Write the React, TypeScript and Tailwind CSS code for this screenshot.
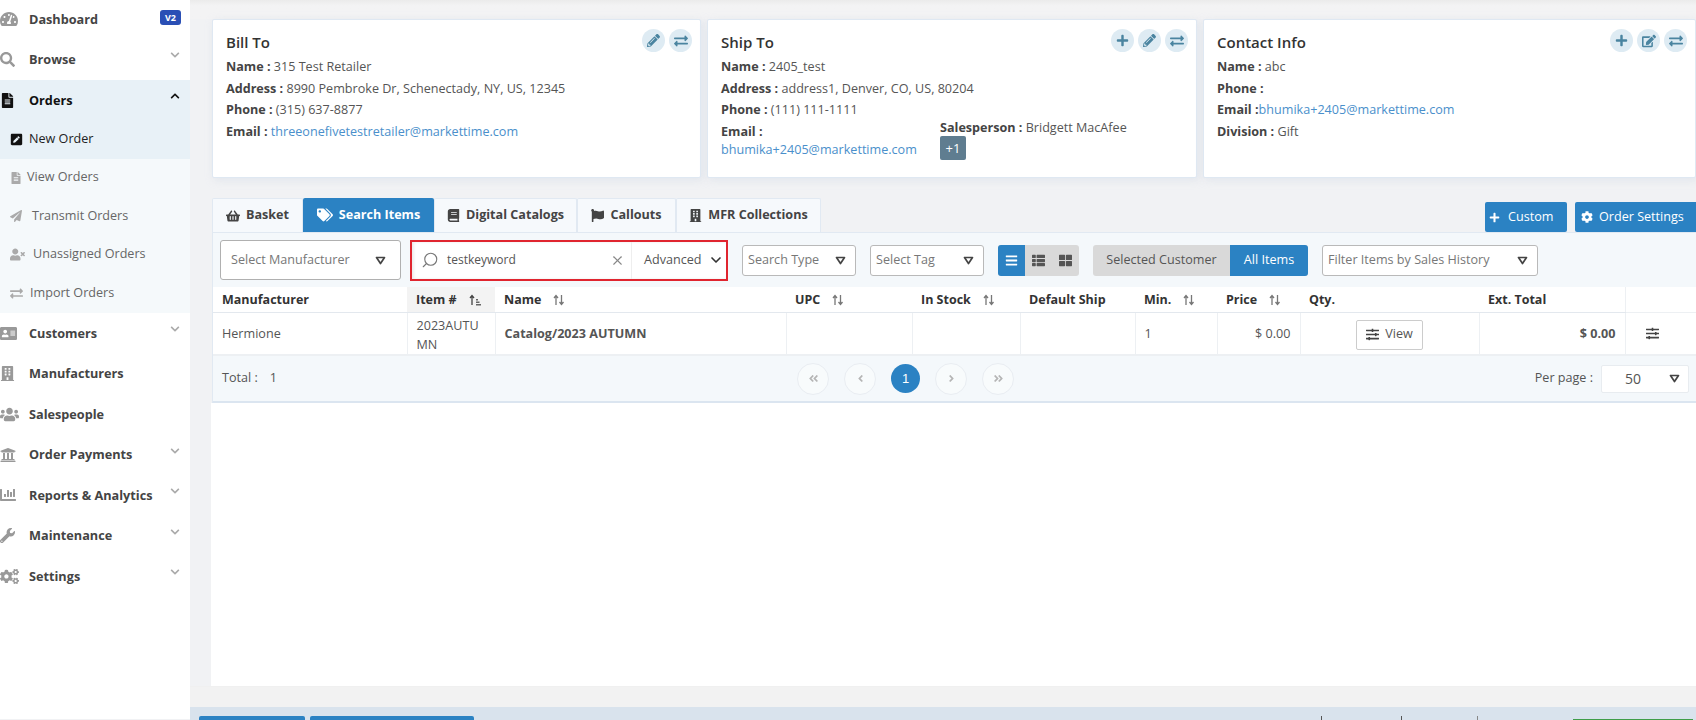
import React from "react";
import {
  FaTachometerAlt, FaSearch, FaFileAlt, FaPenSquare, FaPaperPlane, FaUserTimes, FaExchangeAlt,
  FaAddressCard, FaBuilding, FaUsers, FaUniversity, FaChartBar, FaWrench, FaCogs, FaChevronDown, FaChevronUp,
  FaPencilAlt, FaPlus, FaEdit, FaShoppingBasket, FaTags, FaBook, FaFlag, FaBars, FaThList, FaThLarge, FaCog,
  FaSlidersH, FaAngleDoubleLeft, FaAngleDoubleRight, FaAngleLeft, FaAngleRight,
} from "react-icons/fa";
import { Search, X, ChevronDown } from "lucide-react";

function Caret() {
  return (
    <svg width="11" height="9" viewBox="0 0 11 9" className="shrink-0">
      <path d="M1.5 1.5h8L5.5 7.5z" fill="none" stroke="#444" strokeWidth="1.7" strokeLinejoin="round" />
    </svg>
  );
}

function Sort({ amount }: { amount?: boolean }) {
  return (
    <svg width="12" height="12" viewBox="0 0 12 12" className="shrink-0">
      <path d="M3 11V2M1 4l2-2.5L5 4" fill="none" stroke={amount ? "#444" : "#777"} strokeWidth="1.3" />
      {amount ? (
        <path d="M7 5h2v1.5H7zM7 7.5h3.5V9H7zM7 10h5v1.5H7z" fill="#666" />
      ) : (
        <path d="M8.5 1v9M6.5 8l2 2.5 2-2.5" fill="none" stroke="#777" strokeWidth="1.3" />
      )}
    </svg>
  );
}

function NavItem({ icon, label, chevron, up, dark }: { icon: React.ReactNode; label: string; chevron?: boolean; up?: boolean; dark?: boolean }) {
  return (
    <div className={`relative h-[40.45px] flex items-center shrink-0 ${dark ? "text-[#111]" : "text-[#444]"}`}>
      <span className={`w-[29px] flex items-center ${dark ? "text-[#111]" : "text-[#999]"}`}>{icon}</span>
      <span className="text-[12.7px] font-bold">{label}</span>
      {chevron && (
        <span className={`absolute left-[170px] top-[11px] ${dark ? "text-[#111]" : "text-[#aaa]"}`}>
          {up ? <FaChevronUp size={10} /> : <FaChevronDown size={10} />}
        </span>
      )}
    </div>
  );
}

function SubItem({ icon, label, active, gap }: { icon: React.ReactNode; label: string; active?: boolean; gap: string }) {
  return (
    <div className={`h-[39px] flex items-center pl-[10px] pb-[1px] text-[12.6px] ${active ? "bg-[#e8f1f7] text-[#222]" : "text-[#666]"} ${gap}`}>
      <span className={active ? "text-[#111]" : "text-[#aaa]"}>{icon}</span>
      <span>{label}</span>
    </div>
  );
}

function Sidebar() {
  return (
    <aside className="w-[190px] shrink-0 bg-white h-[720px] overflow-hidden flex flex-col -mt-px pt-0">
      <div className="relative">
        <NavItem icon={<FaTachometerAlt size={18} />} label="Dashboard" />
        <span className="absolute left-[160px] top-[11px] w-[21px] h-[15px] rounded-[3px] bg-[#2a4fb5] text-white text-[9px] font-bold flex items-center justify-center">V2</span>
      </div>
      <NavItem icon={<FaSearch size={15} />} label="Browse" chevron />
      <div className="bg-[#e8f1f7]">
        <NavItem icon={<FaFileAlt size={15} />} label="Orders" chevron up dark />
      </div>
      <div className="h-[193px] bg-[#f5f9fb] flex flex-col">
        <SubItem active icon={<FaPenSquare size={13} />} label="New Order" gap="gap-[6px]" />
        <SubItem icon={<FaFileAlt size={12} />} label="View Orders" gap="gap-[5px]" />
        <SubItem icon={<FaPaperPlane size={12} />} label="Transmit Orders" gap="gap-[10px]" />
        <SubItem icon={<FaUserTimes size={15} />} label="Unassigned Orders" gap="gap-[8px]" />
        <SubItem icon={<FaExchangeAlt size={13} />} label="Import Orders" gap="gap-[7px]" />
      </div>
      <NavItem icon={<FaAddressCard size={17} />} label="Customers" chevron />
      <NavItem icon={<FaBuilding size={15} />} label="Manufacturers" />
      <NavItem icon={<FaUsers size={19} />} label="Salespeople" />
      <NavItem icon={<FaUniversity size={16} />} label="Order Payments" chevron />
      <NavItem icon={<FaChartBar size={16} />} label="Reports & Analytics" chevron />
      <NavItem icon={<FaWrench size={15} />} label="Maintenance" chevron />
      <NavItem icon={<FaCogs size={19} />} label="Settings" chevron />
    </aside>
  );
}

function RoundIcon({ children }: { children: React.ReactNode }) {
  return <span className="w-[23px] h-[23px] rounded-full bg-[#deebf3] text-[#4a84a0] flex items-center justify-center">{children}</span>;
}

function Field({ k, children }: { k: string; children?: React.ReactNode }) {
  return (
    <div className="h-[21.6px] leading-[21.6px] whitespace-nowrap">
      <b className="font-bold text-[#444]">{k}</b>
      {children}
    </div>
  );
}

const linkCls = "text-[#4a8fcb]";

function Card({ title, icons, width, children }: { title: string; icons: React.ReactNode; width: string; children: React.ReactNode }) {
  return (
    <section className={`relative h-[159px] bg-white border border-[#dfe8f2] rounded-[2px] shadow-[2px_2px_8px_rgba(200,210,225,0.4)] pl-[13px] pt-[10px] text-[12.6px] text-[#555] ${width}`}>
      <h3 className="text-[15px] leading-[24px] font-semibold text-[#333] mb-[2px]">{title}</h3>
      <div className="absolute top-[9px] right-[8px] flex gap-[4px]">{icons}</div>
      {children}
    </section>
  );
}

function Tab({ icon, label, width, active }: { icon: React.ReactNode; label: string; width: string; active?: boolean }) {
  return (
    <div className={`h-[34px] flex items-center justify-center gap-[6px] text-[12.6px] font-bold rounded-t-[2px] ${width} ${active ? "bg-[#2b82c3] text-white" : "bg-[#f6f9fc] text-[#444] border border-b-0 border-[#e1e9f2]"}`}>
      {icon}
      <span>{label}</span>
    </div>
  );
}

function Sel({ label, width }: { label: string; width: string }) {
  return (
    <div className={`h-[31px] bg-white border border-[#b9b9b9] rounded-[3px] flex items-center justify-between pl-[5px] pr-[9px] text-[12.6px] text-[#777] ${width}`}>
      <span className="whitespace-nowrap">{label}</span>
      <Caret />
    </div>
  );
}

function Th({ children, sort, amount, extra }: { children?: React.ReactNode; sort?: boolean; amount?: boolean; extra?: string }) {
  return (
    <th className={`h-[25px] border-b border-[#e3e8ee] px-[9px] pt-[2px] text-left font-bold text-[#333] text-[12.5px] ${extra ?? ""}`}>
      <span className="flex items-center gap-[12px] whitespace-nowrap">
        {children}
        {sort && <Sort amount={amount} />}
      </span>
    </th>
  );
}

function Page({ children }: { children: React.ReactNode }) {
  return <span className="w-[32px] h-[32px] rounded-full bg-white/40 border border-[#e9edf2] flex items-center justify-center text-[#b5b5b5]">{children}</span>;
}

export default function App() {
  const td = "border-r border-b-2 border-[#edf0f3] px-[9px] pt-[3px] text-[12.6px] text-[#555]";
  return (
    <div className="w-[1696px] h-[720px] overflow-hidden flex bg-[#f1f2f4] font-['Open_Sans',sans-serif]">
      <Sidebar />
      <main className="flex-1 h-[720px] flex flex-col min-w-0">
        <div className="h-[19px] shrink-0 bg-gradient-to-b from-[#ebebeb] to-[#f3f3f4] to-30%" />
        <div className="flex gap-[6px] pl-[22px] shrink-0">
          <Card title="Bill To" width="w-[489px]" icons={<><RoundIcon><FaPencilAlt size={13} /></RoundIcon><RoundIcon><FaExchangeAlt size={14} /></RoundIcon></>}>
            <Field k="Name : ">315 Test Retailer</Field>
            <Field k="Address : ">8990 Pembroke Dr, Schenectady, NY, US, 12345</Field>
            <Field k="Phone : ">(315) 637-8877</Field>
            <Field k="Email : "><span className={linkCls}>threeonefivetestretailer@markettime.com</span></Field>
          </Card>
          <Card title="Ship To" width="w-[490px]" icons={<><RoundIcon><FaPlus size={13} /></RoundIcon><RoundIcon><FaPencilAlt size={13} /></RoundIcon><RoundIcon><FaExchangeAlt size={14} /></RoundIcon></>}>
            <Field k="Name : ">2405_test</Field>
            <Field k="Address : ">address1, Denver, CO, US, 80204</Field>
            <Field k="Phone : ">(111) 111-1111</Field>
            <div className="flex">
              <div className="w-[219px]">
                <Field k="Email :" />
                <div className={`${linkCls} leading-[16px]`}>bhumika+2405@markettime.com</div>
              </div>
              <div className="-mt-[4px]">
                <Field k="Salesperson : ">Bridgett MacAfee</Field>
                <span className="inline-flex -mt-[2px] w-[26px] h-[24px] items-center justify-center rounded-[2px] bg-[#5f7d90] text-white text-[13px]">+1</span>
              </div>
            </div>
          </Card>
          <Card title="Contact Info" width="flex-1" icons={<><RoundIcon><FaPlus size={13} /></RoundIcon><RoundIcon><FaEdit size={14} /></RoundIcon><RoundIcon><FaExchangeAlt size={14} /></RoundIcon></>}>
            <Field k="Name : ">abc</Field>
            <Field k="Phone : " />
            <Field k="Email :"><span className={linkCls}>bhumika+2405@markettime.com</span></Field>
            <Field k="Division : ">Gift</Field>
          </Card>
        </div>

        <div className="mt-[20px] pl-[22px] shrink-0 flex items-end">
          <Tab width="w-[91px]" icon={<FaShoppingBasket size={14} />} label="Basket" />
          <Tab width="w-[131px]" active icon={<FaTags size={16} />} label="Search Items" />
          <Tab width="w-[143px]" icon={<FaBook size={13} />} label="Digital Catalogs" />
          <Tab width="w-[99px]" icon={<FaFlag size={13} />} label="Callouts" />
          <Tab width="w-[145px]" icon={<FaBuilding size={13} />} label="MFR Collections" />
          <div className="ml-auto flex gap-[8px]">
            <div className="w-[82px] h-[30px] bg-[#2b82c3] text-white rounded-[2px] text-[12.6px] flex items-center pl-[4px] gap-[8px]">
              <FaPlus size={11} />Custom
            </div>
            <div className="w-[121px] h-[30px] bg-[#2b82c3] text-white rounded-l-[2px] text-[12.6px] flex items-center pl-[6px] gap-[6px]">
              <FaCog size={12} />Order Settings
            </div>
          </div>
        </div>

        <div className="ml-[22px] flex-none border-t border-l border-[#e1e9f2] border-b-2 border-b-[#dbe5f0] bg-[#f4f8fb]">
          <div className="h-[54px] flex items-center pl-[7px]">
            <div className="w-[181px] h-[40px] bg-white border border-[#b0b0b0] rounded-[3px] flex items-center justify-between pl-[10px] pr-[14px] text-[12.6px] text-[#777]">
              <span>Select Manufacturer</span>
              <Caret />
            </div>
            <div className="ml-[9px] w-[318px] h-[41px] border-2 border-[#e0252f] bg-white flex items-center text-[12.6px] text-[#555] shadow-[inset_2px_0_3px_rgba(0,0,0,0.08)]">
              <Search size={18} strokeWidth={1.5} className="ml-[9px] mr-[8px] -scale-x-100 text-[#777]" />
              <span className="flex-1 text-[12px]">testkeyword</span>
              <X size={15} strokeWidth={1.8} className="mr-[6px] text-[#888]" />
              <span className="h-full border-l border-[#eee] pl-[12px] flex items-center gap-[6px] w-[95px] shrink-0">
                Advanced <ChevronDown size={16} strokeWidth={2.5} className="text-[#333]" />
              </span>
            </div>
            <Sel label="Search Type" width="ml-[14px] w-[114px]" />
            <Sel label="Select Tag" width="ml-[14px] w-[114px]" />
            <div className="ml-[14px] w-[81px] h-[31px] rounded-[3px] bg-[#d9d9d9] flex items-center text-[#555]">
              <span className="w-[27px] h-full rounded-l-[3px] bg-[#2b82c3] text-white flex items-center justify-center"><FaBars size={13} /></span>
              <span className="w-[27px] flex justify-center"><FaThList size={13} /></span>
              <span className="w-[27px] flex justify-center"><FaThLarge size={13} /></span>
            </div>
            <div className="ml-[14px] w-[215px] h-[31px] rounded-[3px] bg-[#d9d9d9] flex items-center text-[12.6px] text-[#555] overflow-hidden">
              <span className="w-[137px] text-center">Selected Customer</span>
              <span className="flex-1 h-full bg-[#2b82c3] text-white flex items-center justify-center">All Items</span>
            </div>
            <Sel label="Filter Items by Sales History" width="ml-[14px] w-[216px]" />
          </div>

          <table className="w-full table-fixed border-collapse bg-white">
            <colgroup>
              <col className="w-[194px]" />
              <col className="w-[88px]" />
              <col className="w-[291px]" />
              <col className="w-[126px]" />
              <col className="w-[108px]" />
              <col className="w-[115px]" />
              <col className="w-[82px]" />
              <col className="w-[83px]" />
              <col className="w-[179px]" />
              <col className="w-[146px]" />
              <col />
            </colgroup>
            <thead>
              <tr>
                <Th>Manufacturer</Th>
                <Th sort amount extra="bg-[#f3f3f3]">Item #</Th>
                <Th sort>Name</Th>
                <Th sort>UPC</Th>
                <Th sort>In Stock</Th>
                <Th>Default Ship</Th>
                <Th sort>Min.</Th>
                <Th sort>Price</Th>
                <Th>Qty.</Th>
                <Th>Ext. Total</Th>
                <Th extra="border-l border-[#edf0f3]" />
              </tr>
            </thead>
            <tbody>
              <tr className="h-[43px]">
                <td className={td}>Hermione</td>
                <td className={`${td} leading-[19px] break-all pr-[6px]`}>2023AUTUMN</td>
                <td className={`${td} font-bold text-[#333]`}>Catalog/2023 AUTUMN</td>
                <td className={td}></td>
                <td className={td}></td>
                <td className={td}></td>
                <td className={td}>1</td>
                <td className={`${td} text-right`}>$ 0.00</td>
                <td className={td}>
                  <span className="mx-auto flex w-[67px] h-[30px] items-center justify-center gap-[6px] border border-[#ccc] rounded-[2px] text-[#555]">
                    <FaSlidersH size={13} className="text-[#444]" />View
                  </span>
                </td>
                <td className={`${td} text-right font-bold text-[#333]`}>$ 0.00</td>
                <td className="border-b-2 border-[#edf0f3] pl-[20px] text-[#444]"><FaSlidersH size={13} /></td>
              </tr>
            </tbody>
          </table>

          <div className="h-[45px] flex items-center text-[12.6px] text-[#555]">
            <div className="w-[584px] pl-[9px]">Total :<span className="ml-[12px]">1</span></div>
            <div className="flex items-center gap-[15px]">
              <Page><FaAngleDoubleLeft size={11} /></Page>
              <Page><FaAngleLeft size={11} /></Page>
              <span className="w-[29px] h-[29px] rounded-full bg-[#2b82c3] text-white flex items-center justify-center font-['Liberation_Sans',sans-serif] text-[13px]">1</span>
              <Page><FaAngleRight size={11} /></Page>
              <Page><FaAngleDoubleRight size={11} /></Page>
            </div>
            <div className="ml-auto flex items-center pr-[7px]">
              <span className="mr-[8px]">Per page :</span>
              <span className="w-[88px] h-[28px] bg-white border border-[#e8ecf0] rounded-[2px] flex items-center justify-between pl-[23px] pr-[8px] text-[14px] text-[#555]">
                50 <Caret />
              </span>
            </div>
          </div>
        </div>

        <div className="ml-[21px] flex-1 bg-white min-h-0" />
        <div className="h-[21px] shrink-0 bg-[#f2f2f2] border-t border-[#f0f0f0]" />
        <div className="h-[13px] shrink-0 bg-[#d9e3ed] overflow-hidden flex pt-[9px] pl-[9px]">
          <span className="w-[106px] h-[8px] bg-[#2b82c3] rounded-t-[2px]" />
          <span className="ml-[5px] w-[164px] h-[8px] bg-[#2b82c3] rounded-t-[2px]" />
          <span className="ml-[847px] w-px h-[8px] bg-[#555]" />
          <span className="ml-[79px] w-px h-[8px] bg-[#555]" />
          <span className="ml-[75px] w-px h-[8px] bg-[#888]" />
          <span className="ml-[95px] w-[120px] h-[8px] mt-[3px] bg-[#3f9d4a]" />
        </div>
      </main>
    </div>
  );
}
